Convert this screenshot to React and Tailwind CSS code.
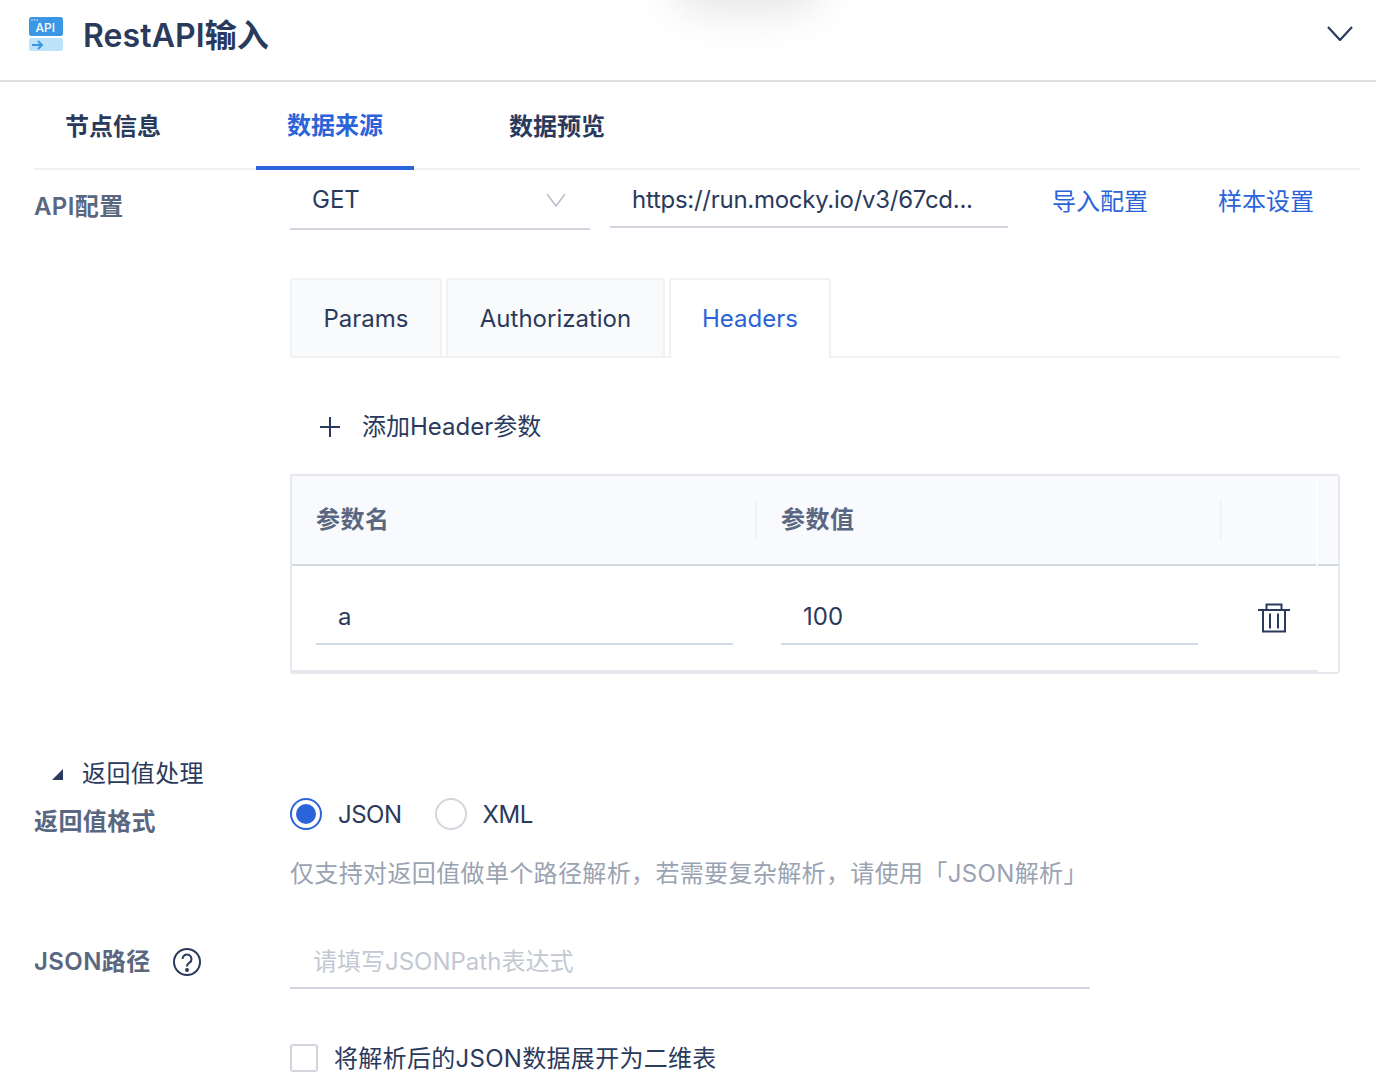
import React from 'react';

const font = { fontFamily: 'Inter, "Noto Sans CJK SC", sans-serif' };

function ApiLogo() {
  return (
    <svg className="mb-[4px]" width="34" height="34" viewBox="0 0 34 34" fill="none">
      <rect width="34" height="19" rx="2.500" fill="#3b97e3" />
      <rect y="21" width="34" height="13" rx="2.500" fill="#bde3fb" />
      <circle cx="3" cy="3" r="0.8" fill="#d6ecfb" />
      <circle cx="5.6" cy="3" r="0.8" fill="#d6ecfb" />
      <circle cx="8.2" cy="3" r="0.8" fill="#d6ecfb" />
      <text x="6.500" y="15" fontSize="12" fontWeight="500" fill="#fff" fontFamily="Inter, sans-serif">API</text>
      <path d="M3 28h10M9 24 13 28l-4 4" stroke="#3b97e3" strokeWidth="2" />
    </svg>
  );
}

function TrashIcon() {
  return (
    <svg width="32" height="30" viewBox="0 0 32 30" fill="none" stroke="#2a3a5c" strokeWidth="2">
      <path d="M0 7h32M8.500 7V1.500h15V7M5 7v21.500h22V7M12 10.500v15M20 10.500v15" />
    </svg>
  );
}

function Chevron({ width, height, color, strokeWidth }) {
  return (
    <svg width={width} height={height} viewBox={`0 0 ${width} ${height}`} fill="none" stroke={color} strokeWidth={strokeWidth}>
      <path d={`M1 1 ${width / 2} ${height - 1} ${width - 1} 1`} />
    </svg>
  );
}

function ParamTab({ label, active, className }) {
  return (
    <div
      className={`flex h-[80px] items-center justify-center rounded-t-[3px] border-2 border-[#f1f2f4] ${active ? 'border-b-0 bg-white text-[#2b63d9]' : 'bg-[#f9fafb] pt-[2px] text-[#2a3a5c]'} ${className}`}
    >
      {label}
    </div>
  );
}

export default function App() {
  return (
    <div style={font} className="relative h-[1074px] w-[1376px] overflow-hidden bg-white text-[24px] leading-[32px] text-[#2a3a5c]">
      <div className="absolute left-[672px] top-[-48px] h-[60px] w-[150px] rounded-full bg-[#e6e6e6] blur-[20px]" />

      <header className="relative flex h-[82px] items-center border-b-2 border-[#dfdfe4] pb-[8px] pl-[29px] pr-[23px]">
        <ApiLogo />
        <h1 className="ml-[20px] text-[32px] font-semibold leading-[40px] tracking-[0.1px] text-[#2a3a5c]">RestAPI输入</h1>
        <div className="mb-[6px] ml-auto">
          <Chevron width={26} height={15} color="#2a3a5c" strokeWidth={2.2} />
        </div>
      </header>

      <nav className="ml-[34px] mr-[16px] flex h-[88px] gap-[64px] border-b-2 border-[#f1f1f3] pt-[4px] font-semibold">
        <div className="flex w-[158px] items-center justify-center">节点信息</div>
        <div className="-mb-[2px] flex w-[158px] items-center justify-center border-b-4 border-[#2b63d9] text-[#2b63d9]">数据来源</div>
        <div className="flex w-[158px] items-center justify-center">数据预览</div>
      </nav>

      <main className="pl-[34px] pr-[36px]">
        <div className="flex items-start">
          <div className="w-[256px] pt-[21px] font-semibold tracking-[0.4px] text-[#5a6780]">API配置</div>
          <div className="flex-1">
            <div className="flex h-[60px] items-start">
              <div className="flex h-[60px] w-[300px] items-center justify-between border-b-2 border-[#d3d5dc] pt-[2px] pl-[22px] pr-[24px]">
                GET
                <Chevron width={20} height={14} color="#b6bcc8" strokeWidth={1.5} />
              </div>
              <div className="ml-[20px] flex h-[58px] w-[398px] items-center border-b-2 border-[#d3d5dc] pl-[22px] pt-[4px] tracking-[-0.27px]">
                https://run.mocky.io/v3/67cd...
              </div>
              <div className="ml-[44px] pt-[16px] text-[#2b63d9]">导入配置</div>
              <div className="ml-[70px] pt-[16px] text-[#2b63d9]">样本设置</div>
            </div>

            <div className="mt-[48px] flex items-start border-b-2 border-[#f1f2f4]">
              <ParamTab label="Params" className="-mb-[2px] w-[152px]" />
              <ParamTab label="Authorization" className="-mb-[2px] ml-[4px] w-[219px]" />
              <ParamTab label="Headers" active className="relative -mb-[2px] ml-[4px] w-[162px]" />
            </div>

            <div className="mt-[53px] flex h-[32px] items-center pl-[30px]">
              <svg width="20" height="20" viewBox="0 0 20 20" fill="none" stroke="#2a3a5c" strokeWidth="2">
                <path d="M0 10h20M10 0v20" />
              </svg>
              <span className="ml-[22px]">添加Header参数</span>
            </div>

            <div className="mt-[31px] rounded-[3px] border-2 border-[#e6e8ee]">
              <div className="flex h-[90px]">
                <div className="flex w-[1024px] items-center border-b-2 border-[#d3d9e1] bg-[#f8fafd] font-semibold tracking-[0.5px] text-[#5a6780]">
                  <div className="h-[38px] w-[465px] border-r-2 border-[#f1f2f4] pl-[24px] leading-[38px]">参数名</div>
                  <div className="h-[38px] w-[465px] border-r-2 border-[#f1f2f4] pl-[24px] leading-[38px]">参数值</div>
                </div>
                <div className="w-[2px] bg-[#fcfdfe]" />
                <div className="flex-1 border-b-2 border-[#d3d9e1] bg-[#f8fafd]" />
              </div>
              <div className="flex h-[106px] items-start">
                <div className="flex h-[106px] w-[1026px] items-start border-b-2 border-[#e6e8ee]">
                  <div className="mt-[25px] ml-[24px] flex h-[54px] w-[417px] items-center border-b-2 border-[#d3d9e1] pl-[22px]">a</div>
                  <div className="mt-[25px] ml-[48px] flex h-[54px] w-[417px] items-center border-b-2 border-[#d3d9e1] pl-[22px]">100</div>
                  <div className="ml-[60px] mt-[37px]"><TrashIcon /></div>
                </div>
              </div>
            </div>
          </div>
        </div>

        <div className="mt-[84px] flex h-[32px] items-center pl-[18px]">
          <svg width="11" height="11" viewBox="0 0 11 11"><path d="M11 0v11H0z" fill="#2a3a5c" /></svg>
          <span className="ml-[19px] tracking-[0.4px]">返回值处理</span>
        </div>

        <div className="mt-[8px] flex items-start">
          <div className="w-[256px] pt-[8px] font-semibold tracking-[0.4px] text-[#5a6780]">返回值格式</div>
          <div>
            <div className="flex h-[32px] items-center">
              <span className="flex h-[32px] w-[32px] items-center justify-center rounded-full border-2 border-[#2b63d9]">
                <span className="h-[20px] w-[20px] rounded-full bg-[#2b63d9]" />
              </span>
              <span className="ml-[16px] pt-[2px] tracking-[-0.5px]">JSON</span>
              <span className="ml-[33px] h-[32px] w-[32px] rounded-full border-2 border-[#d3d5dc]" />
              <span className="ml-[16px] pt-[2px] tracking-[-0.4px]">XML</span>
            </div>
            <p className="mt-[28px] tracking-[0.36px] text-[#9aa3b2]">仅支持对返回值做单个路径解析，若需要复杂解析，请使用「JSON解析」</p>
          </div>
        </div>

        <div className="mt-[56px] flex items-start">
          <div className="flex w-[256px] items-center font-semibold tracking-[0.4px] text-[#5a6780]">
            JSON路径
            <svg className="ml-[22px]" width="28" height="28" viewBox="0 0 28 28" fill="none" stroke="#2a3a5c" strokeWidth="2">
              <circle cx="14" cy="14" r="13" />
              <path d="M9.500 11a4.500 4.500 0 1 1 7 3.700c-1.600 1-2.500 1.800-2.500 3.800" />
              <circle cx="14" cy="22" r="1" />
            </svg>
          </div>
          <div className="-mt-[2px] flex h-[45px] w-[800px] items-start border-b-2 border-[#d3d5dc] pl-[23px] pt-[2px] text-[#c3c8d2]">请填写JSONPath表达式</div>
        </div>

        <div className="ml-[256px] mt-[54px] flex h-[32px] items-center">
          <span className="mb-[2px] h-[28px] w-[28px] rounded-[3px] border-2 border-[#d3d5dc]" />
          <span className="ml-[16px] tracking-[0.3px]">将解析后的JSON数据展开为二维表</span>
        </div>
      </main>
    </div>
  );
}
